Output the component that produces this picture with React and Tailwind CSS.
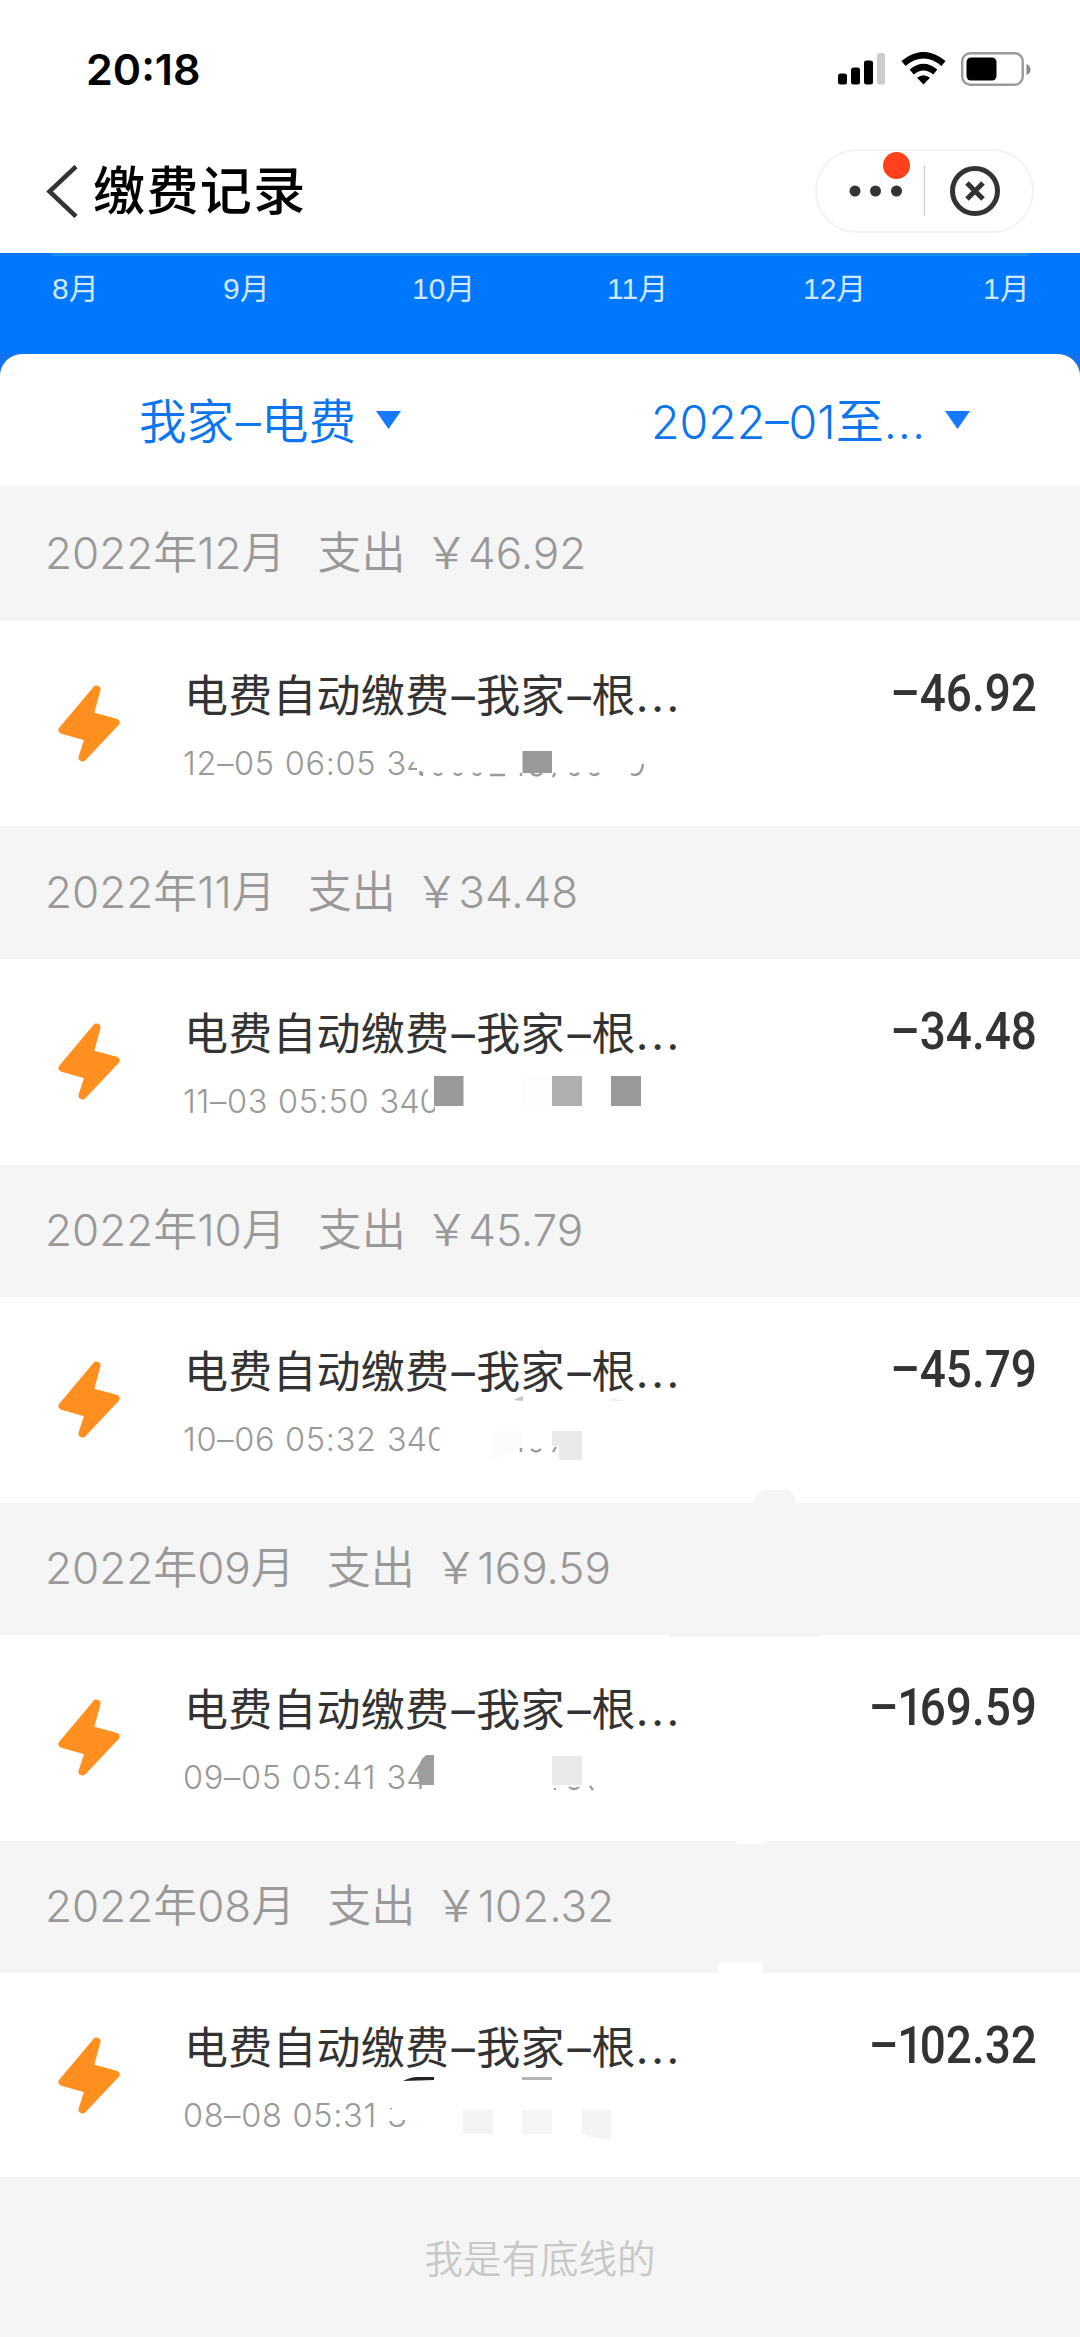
const CJK = "font-['Inter','Noto_Sans_CJK_SC',sans-serif]";

const GRAY = "#9a9a9a";

// Each record carries the blotches painted over its account number, in row coordinates.
const records = [
  {
    month: "2022年12月", total: "46.92", time: "12–05 06:05", account: "34", amount: "46.92",
    head: "h-[135px]", row: "h-[205px]",
    marks: (
      <>
        <path d="M407 126H434V160H423V150H417V141H407Z" fill="#fff" />
        <path d="M422 151v4M434 152q4 4 8 0M454 152q4 4 8 0M473 152q4 4 8 0M490 154h15M521 152v3M531 152q6 5 11 0M555 152l-2 4M570 152q4 4 9 0M590 152q4 4 9 0M631 153q10 4 12-10" fill="none" stroke={GRAY} strokeWidth="2.400" />
        <rect x="522.500" y="130" width="29.500" height="22" fill="#999" />
      </>
    ),
  },
  {
    month: "2022年11月", total: "34.48", time: "11–03 05:50", account: "340", amount: "34.48",
    head: "h-[133px]", row: "h-[206px]",
    marks: (
      <>
        <path d="M428 117H460V170H435V148L428 134Z" fill="#fff" />
        <rect x="434" y="117" width="29.500" height="30" fill="#999" />
        <rect x="552" y="117" width="30" height="30" fill="#afafaf" />
        <rect x="611" y="117" width="30" height="30" fill="#999" />
        <rect x="522" y="117" width="30" height="30" fill="#fdfdfd" />
      </>
    ),
  },
  {
    month: "2022年10月", total: "45.79", time: "10–06 05:32", account: "340", amount: "45.79",
    head: "h-[132px]", row: "h-[206px]",
    marks: (
      <>
        <rect x="439.500" y="124" width="30" height="42" fill="#fff" />
        <path d="M513 103l10-4v5z" fill="#c4c4c4" />
        <path d="M611 101l14 3h-14z" fill="#eee" />
        <path d="M493 134h29v17l-29 12z" fill="#fbfbfb" />
        <path d="M521 151v4M531 152q5 5 10 0M556 150l-3 5" fill="none" stroke={GRAY} strokeWidth="2.400" />
        <path d="M552 134h30v29h-23v-14h-7z" fill="#e9e9e9" />
        <path d="M753 206q5-11 10-13h26q6 5 7 13z" fill="#f5f5f5" />
      </>
    ),
  },
  {
    month: "2022年09月", total: "169.59", time: "09–05 05:41", account: "34", amount: "169.59",
    head: "h-[132px]", row: "h-[206px]",
    marks: (
      <>
        <path d="M669 0h151v2h-151z" fill="#f5f5f5" />
        <path d="M424 148h16v14h-15z" fill="#fff" />
        <path d="M434 120v30h-13l-4-9q1-15 9-21z" fill="#9d9d9d" />
        <rect x="552" y="121" width="30" height="29" fill="#e9e9e9" />
        <path d="M554 154h2M569 152q5 4 10 0M590 151l3 4" fill="none" stroke={GRAY} strokeWidth="2.200" />
        <path d="M734 209q4-1 6-6h20q2 5 6 6z" fill="#fff" />
      </>
    ),
  },
  {
    month: "2022年08月", total: "102.32", time: "08–08 05:31", account: "3", amount: "102.32",
    head: "h-[132px]", row: "h-[204px]",
    marks: (
      <>
        <path d="M719-11h44l-1 12h-44z" fill="#fff" />
        <path d="M403 108q8-4 14-4h17v3z" fill="#222" />
        <rect x="522" y="104" width="30" height="3" fill="#b5b5b5" />
        <path d="M385 126H412V147H385V139H392V135H385Z" fill="#fff" />
        <rect x="463" y="137" width="30" height="24" fill="#f4f4f4" />
        <rect x="522" y="137" width="30" height="24" fill="#f5f5f5" />
        <path d="M582 137h29v30l-22-3-7-4z" fill="#f4f4f4" />
      </>
    ),
  },
];

const months = [
  ["8月", "ml-[52px] w-[171px]"],
  ["9月", "w-[189px]"],
  ["10月", "w-[195px]"],
  ["11月", "w-[196px]"],
  ["12月", "w-[180px]"],
  ["1月", "w-[60px]"],
];

function StatusBar() {
  return (
    <div className="flex h-[138px] items-center justify-between pl-[86px] pr-[49px]">
      <span className="text-[43px] leading-[60px] font-semibold text-black">20:18</span>
      <div className="flex items-center">
        <svg width="48" height="34" viewBox="0 0 48 34">
          <rect x="0" y="21.500" width="9" height="11" rx="2.500" />
          <rect x="13" y="15.500" width="9" height="17" rx="2.500" />
          <rect x="26" y="8.500" width="9" height="24" rx="2.500" />
          <rect x="39" y="1" width="8" height="31.500" rx="2.500" fill="#cbcbcb" />
        </svg>
        <svg className="ml-[15px]" width="45" height="34" viewBox="0 0 45 34">
          <path d="M22.500 32.500L16 25.800q6.500-5 13 0z" />
          <path d="M10.700 20q11.800-9.600 23.600 0" fill="none" stroke="#000" strokeWidth="6.500" />
          <path d="M2.500 11.500q20-16.500 40 0" fill="none" stroke="#000" strokeWidth="6.500" />
        </svg>
        <svg className="ml-[15px]" width="70" height="34" viewBox="0 0 70 34">
          <rect x="1.200" y="1.200" width="60.500" height="31.500" rx="8" fill="#fff" stroke="#9a9a9a" strokeWidth="2.400" />
          <rect x="5.500" y="5.500" width="30" height="23" rx="4.500" />
          <path d="M65.500 12q4 1.500 4 5.500t-4 5.500z" fill="#888" />
        </svg>
      </div>
    </div>
  );
}

function NavBar() {
  return (
    <div className="flex h-[115px] items-start pl-[46px] pr-[46px]">
      <svg className="mt-[27px] shrink-0" width="33" height="53" viewBox="0 0 33 53" fill="none" stroke="#333" strokeWidth="4.500">
        <path d="M30 1.500L3.500 26.500L30 51.500" />
      </svg>
      <h1 className="ml-[14px] mt-[16px] text-[52px] leading-[76px] tracking-[1.400px] font-medium text-black">缴费记录</h1>
      <div className="relative ml-auto mt-[11px] flex h-[84px] w-[219px] items-center rounded-full border-2 border-[#f3f3f3]">
        <svg className="ml-[32px]" width="54" height="12" viewBox="0 0 54 12" fill="#333">
          <circle cx="6" cy="6" r="5.500" />
          <circle cx="26.500" cy="6" r="5.500" />
          <circle cx="47.500" cy="6" r="5.500" />
        </svg>
        <div className="ml-[21px] h-[50px] w-px bg-[#c8c8c8]" />
        <svg className="ml-[25px]" width="50" height="50" viewBox="0 0 50 50" fill="none" stroke="#333">
          <circle cx="25" cy="25" r="22.500" strokeWidth="5" />
          <path d="M17 17L33 33M33 17L17 33" strokeWidth="5" />
        </svg>
        <span className="absolute left-[66px] top-[1px] size-[27px] rounded-full bg-[#ff411c]" />
      </div>
    </div>
  );
}

function Caret() {
  return (
    <svg width="25" height="18" viewBox="0 0 25 18" fill="#1677ff">
      <path d="M0 0H25L12.500 18Z" />
    </svg>
  );
}

function Bolt() {
  return (
    <svg width="62" height="77" viewBox="0 0 62 77" fill="#ff8f1f" stroke="#ff8f1f" strokeWidth="8" strokeLinejoin="round">
      <path d="M38.500 4.500L4.500 45L31 52.500L24.500 72.500L57.500 37.500L31.500 30.500Z" />
    </svg>
  );
}

function Dash() {
  return <span className="inline-block w-[27px] origin-left scale-x-[1.060] text-center">–</span>;
}

function Record({ r }) {
  return (
    <section>
      <div className={`flex items-center bg-[#f5f5f5] pb-[2px] pl-[45px] text-[44px] leading-[64px] font-[350] text-[#999] ${r.head}`}>
        <span>{r.month}</span>
        <span className="ml-[32px]">支出</span>
        <span className="ml-[19px]"><span className="tracking-[-0.500px]">￥</span>{r.total}</span>
      </div>
      <div className={`relative flex items-start bg-white pr-[43px] ${r.row}`}>
        <div className="ml-[58px] mt-[64px]"><Bolt /></div>
        <div className="ml-[63px] mt-[43px]">
          <div className="ml-px text-[44px] leading-[64px] tracking-[0.200px] text-[#333]">
            电费自动缴费<Dash />我家<Dash />根<span className="tracking-[2.700px]">...</span>
          </div>
          <div className="mt-[12px] text-[32.500px] leading-[48px] font-[350] text-[#999]">
            <span className="tracking-[0.700px]">{r.time}</span><span className="ml-px"> {r.account}</span>
          </div>
        </div>
        <div className="ml-auto mt-[43px] origin-right scale-x-90 font-['Roboto',sans-serif] text-[51px] leading-[60px] font-medium text-[#333]">
          –{[...r.amount].map((ch, i) => (
            <span key={i} className={ch === "1" ? "-ml-px tracking-[-4px]" : ""}>{ch}</span>
          ))}
        </div>
        <svg className="absolute left-0 top-0 overflow-visible" width="1080" height="206" viewBox="0 0 1080 206">{r.marks}</svg>
      </div>
    </section>
  );
}

export default function App() {
  return (
    <div className={`flex h-[2337px] w-[1080px] flex-col overflow-hidden bg-white ${CJK}`}>
      <StatusBar />
      <NavBar />
      <div className="h-[101px] shrink-0 bg-[#0077ff]">
        <div className="ml-[52px] h-[3px] w-[977px] bg-[#1a8aef]" />
        <div className="flex pt-[11px] font-['Liberation_Sans','Noto_Sans_CJK_SC',sans-serif] text-[30px] leading-[44px] text-[#d0e8ff]">
          {months.map(([m, c]) => <span key={m} className={c}>{m}</span>)}
        </div>
      </div>
      <div className="shrink-0 bg-[#1570f0]">
        <div className="flex h-[132px] items-center rounded-t-[22px] bg-white text-[47.500px] leading-[66px] font-[350] text-[#0a75ee]">
          <span className="mt-[4px] ml-[139px] w-[237px]">我家<Dash />电费</span>
          <Caret />
          <span className="mt-[4px] ml-[250px] w-[294px] text-[46.500px]">2022–01<span className="text-[48px]">至</span><span className="tracking-[1px]">...</span></span>
          <Caret />
        </div>
      </div>
      {records.map((r) => <Record key={r.month} r={r} />)}
      <div className="flex flex-1 justify-center bg-[#f5f5f5] pt-[54px] text-[38.500px] leading-[56px] font-[350] text-[#c8c8c8]">我是有底线的</div>
    </div>
  );
}
